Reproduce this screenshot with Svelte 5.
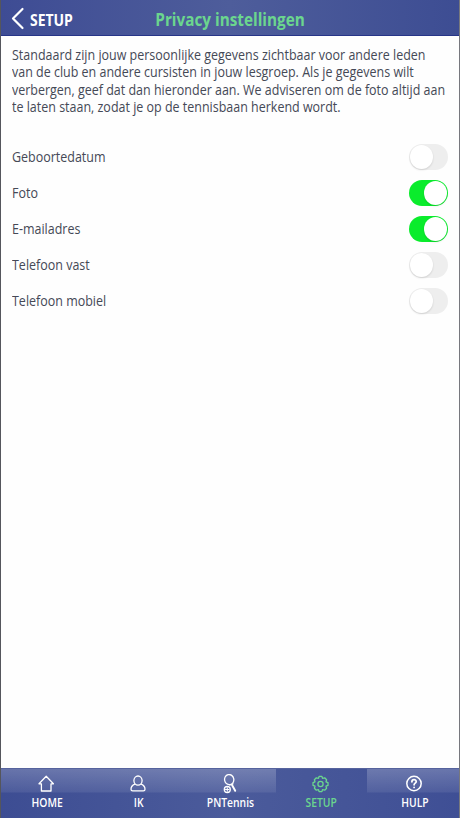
<script>
  let settings = $state([
    { label: 'Geboortedatum', on: false },
    { label: 'Foto', on: true },
    { label: 'E-mailadres', on: true },
    { label: 'Telefoon vast', on: false },
    { label: 'Telefoon mobiel', on: false }
  ]);
  const tabs = [
    { id: 'home', label: 'HOME' },
    { id: 'user', label: 'IK' },
    { id: 'tennis', label: 'PNTennis' },
    { id: 'setup', label: 'SETUP', active: true },
    { id: 'help', label: 'HULP' }
  ];
</script>

<div class="app">
  <header>
    <button class="back">
      <svg width="14" height="24" viewBox="0 0 14 24"><path d="M11.500 2 2 11.500l9.500 9.500" /></svg>
      <span>SETUP</span>
    </button>
    <h1>Privacy instellingen</h1>
  </header>

  <main>
    <p>
      Standaard zijn jouw persoonlijke gegevens zichtbaar voor andere leden<br />
      van de club en andere cursisten in jouw lesgroep. Als je gegevens wilt<br />
      verbergen, geef dat dan hieronder aan. We adviseren om de foto altijd aan<br />
      te laten staan, zodat je op de tennisbaan herkend wordt.
    </p>
    <div class="list">
      {#each settings as s}
        <div class="row">
          <span>{s.label}</span>
          <button class="switch" class:on={s.on} aria-label={s.label} onclick={() => (s.on = !s.on)}>
            <i></i>
          </button>
        </div>
      {/each}
    </div>
  </main>

  <nav>
    {#each tabs as t}
      <button class="tab" class:active={t.active}>
        <svg width="20" height="20" viewBox="0 0 20 20">
          {#if t.id === 'home'}
            <path d="M2 9.800 9.200 2.300l7.200 7.500h-2.400v7.200H4.400V9.800z" />
          {:else if t.id === 'user'}
            <ellipse cx="10" cy="6.600" rx="4.100" ry="4.600" />
            <path d="M6.800 10.200C4.200 11.400 3 13.100 3 15.200c0 1.200.7 1.700 1.700 1.700h10.600c1 0 1.700-.5 1.700-1.700 0-2.100-1.200-3.800-3.800-5" />
          {:else if t.id === 'tennis'}
            <ellipse cx="9.200" cy="5.600" rx="4.600" ry="5.100" transform="rotate(-12 9.200 5.600)" />
            <path d="m9.800 11 3.200-1.200" />
            <path d="m12 11 3.200 5.800" stroke-width="1.900" />
            <circle cx="7.300" cy="15.500" r="3" />
            <path d="M5.500 15.500h3.600M7.300 13.700v3.600" stroke-width="1" />
          {:else if t.id === 'setup'}
            <path d="M8.100 2.400h2.800l.6 1.900 2.200-.5 1.900 1.900-.6 2.100 2 .8v2.800l-2 .8.6 2.100-1.900 1.900-2.200-.5-.6 1.900H8.100l-.6-1.900-2.200.5-1.900-1.900.6-2.100-2-.8V8.600l2-.8-.6-2.100 1.900-1.900 2.200.5z" />
            <circle cx="9.500" cy="10" r="2.600" />
          {:else}
            <circle cx="11" cy="9.500" r="7.200" stroke-width="1.500" />
            <path d="M8.900 7.800C8.900 5 13.200 5.100 13.200 7.500c0 1.600-2.100 1.600-2.100 3.300M11.100 13.300v.1" stroke-width="1.800" />
          {/if}
        </svg>
        <span>{t.label}</span>
      </button>
    {/each}
  </nav>
</div>

<style>
  :global(body) { margin: 0; background: #fff; }
  .app {
    box-sizing: border-box;
    width: 460px;
    height: 818px;
    display: flex;
    flex-direction: column;
    border-left: 1px solid #55565c;
    border-right: 1px solid #77787e;
    background: #fefefe;
    color: #454956;
    font-family: 'Open Sans', 'Noto Sans', sans-serif;
    overflow: hidden;
  }
  button { border: 0; padding: 0; background: none; font: inherit; color: inherit; }
  svg { fill: none; stroke: currentColor; stroke-width: 1.300; stroke-linejoin: round; stroke-linecap: round; display: block; }
  header {
    box-sizing: border-box;
    flex: none;
    height: 36px;
    display: grid;
    grid-template-columns: 1fr auto 1fr;
    align-items: center;
    padding: 4px 10px 0 10px;
    border-bottom: 1px solid #273588;
    background: linear-gradient(90deg, #3e4c94, #4e5d9b 50%, #3d4d93);
  }
  .back { display: flex; align-items: center; gap: 5px; color: #fff; }
  .back svg { stroke-width: 2.200; margin-top: -2px; }
  .back span { font-size: 15.500px; line-height: 20px; font-weight: 700; transform: scaleX(0.900); transform-origin: left; }
  h1 { margin: 0; color: #6bd68e; font-size: 17px; line-height: 22px; font-weight: 700; transform: scaleX(0.900); }
  main { flex: 1; min-width: 0; padding: 10px 11px 0; }
  p { margin: 0; width: 477px; font-size: 13.600px; line-height: 17.400px; white-space: nowrap; transform: scaleX(0.918); transform-origin: left; }
  .list { margin-top: 23px; }
  .row { height: 36px; display: flex; align-items: center; justify-content: space-between; font-size: 13.600px; }
  .row span { transform: scaleX(0.918); transform-origin: left; }
  .switch { display: flex; width: 39px; height: 26px; border-radius: 13px; background: #eee; }
  .switch i { box-sizing: border-box; width: 23px; height: 24px; margin: 1px; border-radius: 50%; background: #fff; box-shadow: 0 1px 2px #0002; }
  .switch.on { background: #0aec2c; justify-content: flex-end; }
  nav { flex: none; height: 50px; display: grid; grid-template-columns: repeat(3, 1fr) 91px 92px; background: linear-gradient(90deg, #3d4d93, #4b5b9b 50%, #3f4f95); border-top: 1px solid #56639d; box-sizing: border-box; }
  .tab {
    box-sizing: border-box;
    display: flex;
    flex-direction: column;
    align-items: center;
    padding-top: 5px;
    color: #fff;
    background: linear-gradient(#ffffff38, #ffffff14 23px, transparent 24px);
  }
  .tab:last-child { padding-left: 3px; }
  .tab:last-child svg { margin-left: -2px; }
  .tab.active { color: #6bd68e; background: none; }
  .tab span { font-size: 12px; line-height: 16px; font-weight: 600; margin-top: 1px; transform: scaleX(0.860); }
</style>
